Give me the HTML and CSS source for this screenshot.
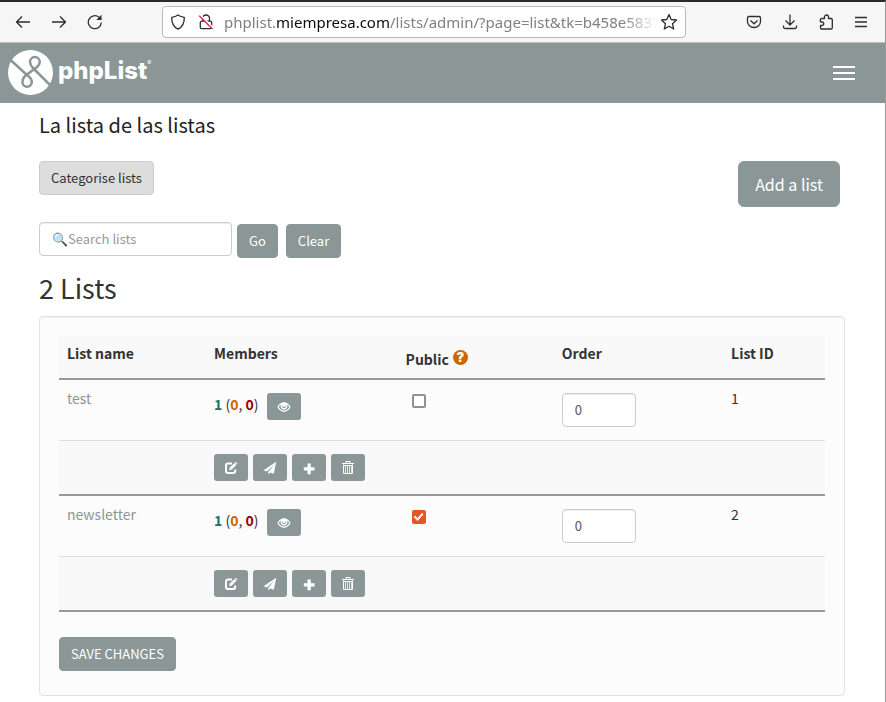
FILE: index.html
```html
<!DOCTYPE html>
<html lang="es">
<head>
<meta charset="utf-8">
<meta name="viewport" content="width=device-width, initial-scale=1">
<title>phpList</title>
<link rel="stylesheet" href="styles.css">
</head>
<body>
<svg class="symbols" aria-hidden="true">
  <symbol id="eye" viewBox="0 0 14 12"><path fill="currentColor" fill-rule="evenodd" d="M7 1.200C3.800 1.200 1.500 3.800 .4 6 1.500 8.200 3.800 10.800 7 10.800S12.500 8.200 13.600 6C12.500 3.800 10.200 1.200 7 1.200zM7 9.500C4.500 9.500 2.700 7.800 1.800 6 2.200 5.100 2.900 4.200 3.800 3.600A3.500 3.500 0 1 0 10.200 3.600C11.100 4.200 11.800 5.100 12.200 6 11.300 7.800 9.500 9.500 7 9.500zM5 3.800A2.400 2.400 0 0 0 7 7.300 2.400 2.400 0 0 0 9 3.800 2.200 2.200 0 0 1 6.300 5.900C5.500 5.500 5.100 4.600 5 3.800z"/></symbol>
  <symbol id="edit" viewBox="0 0 14 14"><path fill="none" stroke="currentColor" stroke-width="2" d="M8 2.500H4Q2 2.500 2 4.500V10Q2 12 4 12H9.200Q11.200 12 11.200 10V8.500"/><path fill="currentColor" d="M5.200 9.200l.6-2.700 4.500-4.500 2 2L7.800 8.500zM10.800 1.500l.8-.8 2 2-.8.8z"/></symbol>
  <symbol id="send" viewBox="0 0 14 14"><path fill="currentColor" d="M13.200.8L.5 9.200l3.500 1.300L11.400 3.500 5.300 11v2.500l2-1.900 3.500 1.200z"/></symbol>
  <symbol id="plus" viewBox="0 0 14 14"><path fill="currentColor" d="M5.500 2.500h3.300v3.700h3.700v3.300H8.800v3.700H5.500V9.500H1.800V6.200h3.700z"/></symbol>
  <symbol id="trash" viewBox="0 0 14 14"><path fill="none" stroke="currentColor" d="M1 2.500h12M5 2V.5h4V2M2.500 3.500v9h9v-9M2.500 4.500h9"/><path fill="none" stroke="#f6dcc9" d="M4.500 5v7M6.500 5v7M8.500 5v7M10.500 5v7"/></symbol>
</svg>

<div class="window">
<div class="toolbar">
  <div class="nav">
    <button type="button" aria-label="Back"><svg width="16" height="16" viewBox="0 0 16 16"><path d="M15 8H1.500M7 2.500L1.500 8 7 13.500"/></svg></button>
    <button type="button" aria-label="Forward"><svg width="16" height="16" viewBox="0 0 16 16"><path d="M1 8h13.500M9 2.500L14.500 8 9 13.500"/></svg></button>
    <button type="button" aria-label="Reload"><svg width="16" height="16" viewBox="0 0 16 16"><path d="M14.300 8.500A6.500 6.500 0 1 1 12 3.200"/><path class="solid" d="M14.500.8V6H9.300z"/></svg></button>
  </div>
  <div class="address">
    <svg width="16" height="16" viewBox="0 0 16 16"><path d="M8 1Q5.500 2.800 1.700 3.300C1.500 8.500 3.500 13 8 15.200 12.500 13 14.500 8.500 14.300 3.300Q10.500 2.800 8 1z"/></svg>
    <svg width="16" height="16" viewBox="0 0 16 16"><path d="M4.500 7V4.500a3.500 3.500 0 0 1 7 0V7M4 7.200h8q1.700 0 1.700 1.700v4.400q0 1.400-1.400 1.400H3.700q-1.400 0-1.400-1.400V8.900Q2.300 7.200 4 7.200z"/><path class="halo" d="M2.200 1.200L15.500 14.500"/><path class="slash" d="M1.200 1.700L14.500 15"/></svg>
    <div class="url">phplist.<b>miempresa.com</b>/lists/admin/?page=list&amp;tk=b458e5837</div>
    <button type="button" aria-label="Bookmark"><svg width="18" height="18" viewBox="0 0 18 18"><path d="M9 1.500l2.200 5 5.300.5-4 3.700 1.200 5.300L9 13.300 4.300 16l1.200-5.300-4-3.700 5.300-.5z"/></svg></button>
  </div>
  <div class="tools">
    <button type="button" aria-label="Pocket"><svg width="16" height="16" viewBox="0 0 16 16"><path d="M3 2.500h10q1.500 0 1.500 1.500v3.500a6.500 6 0 0 1-13 0V4Q1.500 2.500 3 2.500zM4.500 6.500L8 9.800l3.500-3.300"/></svg></button>
    <button type="button" aria-label="Downloads"><svg width="16" height="16" viewBox="0 0 16 16"><path d="M8 .5v10M3.500 6.500L8 11l4.500-4.500M1.500 11.500v1.500q0 1.500 1.500 1.500h10q1.500 0 1.500-1.500v-1.500"/></svg></button>
    <button type="button" aria-label="Extensions"><svg width="16" height="16" viewBox="0 0 16 16"><path d="M3.500 4.500H6.500V3a2 2 0 0 1 4 0v1.500H13q1.300 0 1.300 1.300v7.900q0 1.300-1.300 1.300H3.800q-1.300 0-1.300-1.300v-2.200H4a1.700 1.700 0 0 0 0-3.500H2.500"/><path d="M2.300 8V5.800q0-1.300 1.300-1.300"/></svg></button>
    <button type="button" aria-label="Menu"><svg width="14" height="16" viewBox="0 0 14 16"><path d="M1 3.500h12M1 8h12M1 12.500h12"/></svg></button>
  </div>
</div>

<header class="masthead">
  <a class="brand" href="#" aria-label="phpList">
    <svg width="46" height="46" viewBox="0 0 46 46"><circle cx="23.500" cy="22.500" r="22.500" fill="#fff"/><path fill="none" stroke="#8a9796" stroke-width="2.500" d="M3 9.500L20.500 25.500Q24.800 28.500 24.800 32A4.700 4.700 0 0 1 15.400 32Q15.400 28.500 18 26L30 17Q32.800 14.500 32.800 12A4.900 4.900 0 0 0 23 12Q23 15 26 18L43 35"/></svg>
    <span class="wordmark">phpList<sup>®</sup></span>
  </a>
  <button class="burger" type="button" aria-label="Menu"><i></i><i></i><i></i></button>
</header>

<main>
  <h1>La lista de las listas</h1>
  <div class="actions">
    <a class="btn light" href="#">Categorise lists</a>
    <a class="btn large" href="#">Add a list</a>
  </div>
  <form class="search">
    <input type="text" aria-label="Search lists" placeholder="🔍Search lists">
    <button class="btn" type="submit">Go</button>
    <button class="btn" type="reset">Clear</button>
  </form>
  <h2>2 Lists</h2>
  <form class="panel">
    <table>
      <colgroup><col class="c-name"><col class="c-members"><col class="c-public"><col class="c-order"><col></colgroup>
      <thead>
        <tr><th>List name</th><th>Members</th><th><span class="with-help">Public <button class="help" type="button" aria-label="Help">?</button></span></th><th>Order</th><th>List ID</th></tr>
      </thead>
      <tbody>
        <tr class="item">
          <td><a href="#">test</a></td>
          <td><div class="members"><span><b class="ok">1</b> (<b class="wait">0</b>, <b class="bad">0</b>)</span><button class="icon" type="button" aria-label="View members"><svg width="14" height="12"><use href="#eye"/></svg></button></div></td>
          <td><input type="checkbox" aria-label="test public"></td>
          <td><div class="order"><input type="text" value="0" aria-label="test order"></div></td>
          <td>1</td>
        </tr>
        <tr class="tools-row">
          <td></td>
          <td colspan="4"><div class="icons">
            <button class="icon" type="button" aria-label="Edit"><svg width="14" height="14"><use href="#edit"/></svg></button>
            <button class="icon" type="button" aria-label="Send"><svg width="14" height="14"><use href="#send"/></svg></button>
            <button class="icon" type="button" aria-label="Add"><svg width="14" height="14"><use href="#plus"/></svg></button>
            <button class="icon" type="button" aria-label="Delete"><svg width="14" height="14"><use href="#trash"/></svg></button>
          </div></td>
        </tr>
        <tr class="item">
          <td><a href="#">newsletter</a></td>
          <td><div class="members"><span><b class="ok">1</b> (<b class="wait">0</b>, <b class="bad">0</b>)</span><button class="icon" type="button" aria-label="View members"><svg width="14" height="12"><use href="#eye"/></svg></button></div></td>
          <td><input type="checkbox" checked aria-label="newsletter public"></td>
          <td><div class="order"><input type="text" value="0" aria-label="newsletter order"></div></td>
          <td>2</td>
        </tr>
        <tr class="tools-row">
          <td></td>
          <td colspan="4"><div class="icons">
            <button class="icon" type="button" aria-label="Edit"><svg width="14" height="14"><use href="#edit"/></svg></button>
            <button class="icon" type="button" aria-label="Send"><svg width="14" height="14"><use href="#send"/></svg></button>
            <button class="icon" type="button" aria-label="Add"><svg width="14" height="14"><use href="#plus"/></svg></button>
            <button class="icon" type="button" aria-label="Delete"><svg width="14" height="14"><use href="#trash"/></svg></button>
          </div></td>
        </tr>
      </tbody>
    </table>
    <button class="btn" type="submit">SAVE CHANGES</button>
  </form>
</main>
</div>
</body>
</html>
```

FILE: styles.css
```css
* { box-sizing: border-box; }
body {
  margin: 0;
  background: #fff;
  color: #333;
  font: 14px/20px "Noto Sans CJK SC", "Noto Sans", sans-serif;
}
button, input { font: inherit; color: inherit; }
button { cursor: pointer; }
a { text-decoration: none; color: #8a9796; }
svg { display: block; flex: none; }
.symbols { position: absolute; width: 0; height: 0; }
.window {
  min-height: 100vh;
  border-top: 2px solid #2b2929;
  border-right: 1px solid #999;
}

/* Browser toolbar */
.toolbar {
  display: flex;
  align-items: center;
  height: 41px;
  padding: 0 17px 0 15px;
  background: #f6f6f6;
  border-bottom: 1px solid #bdbdbd;
}
.toolbar button { padding: 0; border: 0; background: none; }
.toolbar svg { fill: none; stroke: #2e2e2e; stroke-width: 1.3; stroke-linejoin: round; }
.toolbar .solid { fill: #2e2e2e; stroke: none; }
.toolbar .halo { stroke: #fff; stroke-width: 2; }
.toolbar .slash { stroke: #e22850; }
.nav { display: flex; gap: 20px; margin-right: 59px; }
.address {
  display: flex;
  align-items: center;
  gap: 12px;
  flex: 1;
  min-width: 0;
  height: 32px;
  padding: 0 7px;
  background: #fff;
  border: 1px solid #bababa;
  border-radius: 4px;
}
.url {
  flex: 1;
  min-width: 0;
  margin: 0 -10px 0 -2px;
  overflow: hidden;
  white-space: nowrap;
  color: #808080;
  font: 15px/20px "Noto Sans", sans-serif;
  mask-image: linear-gradient(to left, transparent, #000 36px);
}
.url b { font-weight: 400; color: #0c0c0d; }
.tools { display: flex; gap: 20px; margin-left: 60px; }

/* Masthead */
.masthead {
  display: flex;
  align-items: center;
  justify-content: space-between;
  height: 60px;
  padding: 0 30px 0 7px;
  background: #8a9796;
}
.brand { display: flex; align-items: center; gap: 5px; color: #fff; }
.wordmark { padding-bottom: 4px; font: 800 24px/30px Inter, sans-serif; }
.wordmark sup { font-size: 6px; font-weight: 400; line-height: 6px; vertical-align: 14px; }
.burger {
  display: grid;
  gap: 4px;
  padding: 0;
  border: 0;
  background: none;
}
.burger i { width: 22px; height: 2px; background: #fff; }

/* Page */
main { padding: 7px 40px 0 39px; }
h1, h2 { margin: 0; font-weight: 400; }
h1 { font-size: 20px; line-height: 30px; color: #222; }
h2 { margin-top: 12px; font-size: 27px; line-height: 36px; }
.actions {
  display: flex;
  justify-content: space-between;
  align-items: flex-start;
  margin-top: 21px;
  padding-right: 5px;
}
.btn {
  padding: 6px 11px;
  border: 1px solid #8a9796;
  border-radius: 4px;
  background: #8a9796;
  color: #fff;
  font-size: 13px;
  line-height: 20px;
}
.btn.light { background: #ddd; border-color: #ccc; color: #333; }
.btn.large { padding: 10px 16px; border-radius: 6px; font-size: 16px; line-height: 24px; }
.search { display: flex; align-items: flex-start; gap: 5px; margin-top: 15px; }
.search .btn { margin-top: 2px; }
.search .btn + .btn { margin-left: 3px; }
input[type="text"] {
  height: 34px;
  padding: 5px 12px 7px;
  border: 1px solid #ccc;
  border-radius: 4px;
  background: #fff;
  box-shadow: inset 0 1px 1px rgba(0, 0, 0, .075);
  color: #555;
  font-size: 13px;
}
.search input { width: 193px; }
.search input::placeholder { color: #999; }
.panel {
  margin-top: 10px;
  padding: 19px 19px 24px;
  border: 1px solid #e3e3e3;
  border-radius: 4px;
  background: #fcfcfc;
  box-shadow: inset 0 1px 1px rgba(0, 0, 0, .05);
}

/* Lists table */
table {
  width: 100%;
  margin-bottom: 25px;
  table-layout: fixed;
  border-spacing: 0;
}
.c-name { width: 19.2%; }
.c-members { width: 25%; }
.c-public { width: 20.4%; }
.c-order { width: 22.1%; }
th, td { padding: 8px; text-align: left; vertical-align: top; }
th { padding: 7px 8px 9px; background: #f9f9f9; border-bottom: 2px solid #999; }
.item td { border-bottom: 1px solid #ddd; }
.tools-row td { padding: 13px 8px; background: #f9f9f9; border-bottom: 2px solid #999; }
.with-help { display: flex; align-items: flex-end; gap: 4px; height: 26px; }
.help {
  width: 15px;
  height: 15px;
  margin-bottom: 4px;
  padding: 0;
  border: 0;
  border-radius: 50%;
  background: #c60;
  color: #fff;
  font: 900 13px/15px Inter, sans-serif;
}
.members { display: flex; gap: 8px; padding-top: 5px; }
.members span { line-height: 22px; }
.ok { color: #1f6f6b; }
.wait { color: #c60; }
.bad { color: #900; }
.icons { display: flex; gap: 5px; }
.icon {
  display: flex;
  align-items: center;
  justify-content: center;
  width: 34px;
  height: 27px;
  padding: 0;
  border: 0;
  border-radius: 3px;
  background: #8a9796;
  color: #fff;
}
.order { padding: 5px 0; }
.order input { display: block; width: 74px; }
input[type="checkbox"] {
  display: block;
  appearance: none;
  width: 14px;
  height: 14px;
  margin: 6px;
  border: 2px solid #8f8f9d;
  border-radius: 2px;
  background: #fff;
}
input[type="checkbox"]:checked {
  display: grid;
  place-items: center;
  border-color: #e95420;
  background: #e95420;
}
input[type="checkbox"]:checked::before {
  content: "";
  width: 10px;
  height: 8px;
  background: #fff;
  clip-path: polygon(0 50%, 15% 32%, 38% 62%, 85% 0, 100% 15%, 40% 100%);
}
```
